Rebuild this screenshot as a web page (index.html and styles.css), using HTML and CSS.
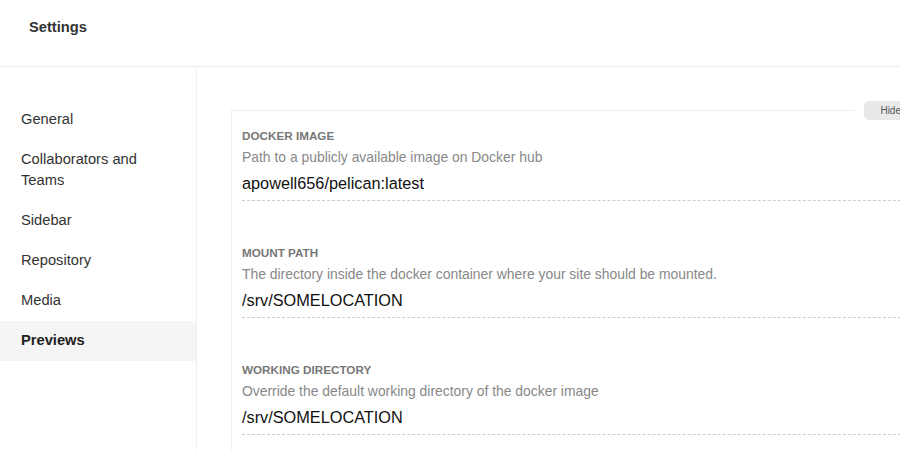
FILE: index.html
```html
<!DOCTYPE html>
<html>
<head>
<meta charset="utf-8">
<link rel="stylesheet" href="styles.css">
</head>
<body>
<div class="page">
  <header class="topbar"><h1 class="title">Settings</h1></header>
  <div class="body">
    <nav class="sidebar">
      <a class="nav-item">General</a>
      <a class="nav-item">Collaborators and Teams</a>
      <a class="nav-item">Sidebar</a>
      <a class="nav-item">Repository</a>
      <a class="nav-item">Media</a>
      <a class="nav-item active">Previews</a>
    </nav>
    <main class="main">
      <fieldset class="card">
        <legend class="legend"><button class="hide-btn">Hide</button></legend>
        <div class="field">
          <div class="label">DOCKER IMAGE</div>
          <div class="desc">Path to a publicly available image on Docker hub</div>
          <div class="value">apowell656/pelican:latest</div>
        </div>
        <div class="field">
          <div class="label">MOUNT PATH</div>
          <div class="desc">The directory inside the docker container where your site should be mounted.</div>
          <div class="value">/srv/SOMELOCATION</div>
        </div>
        <div class="field">
          <div class="label">WORKING DIRECTORY</div>
          <div class="desc">Override the default working directory of the docker image</div>
          <div class="value">/srv/SOMELOCATION</div>
        </div>
      </fieldset>
    </main>
  </div>
</div>
</body>
</html>
```
FILE: styles.css
```css
* { box-sizing: border-box; }
html, body { margin: 0; padding: 0; background: #fff; }
body {
  font-family: "Liberation Sans", Arial, sans-serif;
  color: #333;
  overflow: hidden;
  width: 900px;
  height: 450px;
}
.page { width: 980px; }
.topbar {
  height: 67px;
  border-bottom: 1px solid #eeeeee;
  padding-left: 29px;
  display: flex;
  align-items: center;
  padding-bottom: 13px;
}
.title {
  margin: 0;
  font-size: 14.7px;
  font-weight: bold;
  color: #333;
  line-height: 16px;
}
.body { display: flex; height: 383px; }
.sidebar {
  width: 197px;
  flex: none;
  border-right: 1px solid #eeeeee;
  padding-top: 32.5px;
  display: flex;
  flex-direction: column;
}
.nav-item {
  display: block;
  padding: 9.5px 21px;
  font-size: 14.7px;
  line-height: 21px;
  color: #333;
}
.nav-item.active {
  background: #f5f5f5;
  font-weight: bold;
  color: #222;
}
.main {
  flex: 1;
  padding: 34px 0 0 34px;
}
.card {
  margin: 0;
  border: 1px solid #efefef;
  border-bottom: none;
  padding: 0 30px 0 10px;
  height: 400px;
  width: 726px;
  min-width: 0;
}
.legend {
  margin-left: auto;
  padding: 0 9px;
  line-height: 0;
}
.hide-btn {
  font-family: "Liberation Sans", Arial, sans-serif;
  font-size: 10px;
  color: #555;
  background: #e9e9e9;
  border: none;
  border-radius: 5px;
  height: 19px;
  padding: 0 16px;
  line-height: 19px;
}
.field {
  padding-top: 8px;
  margin-bottom: 36px;
  border-bottom: 1px dashed #cccccc;
  margin-right: -40px;
}
.label {
  font-size: 11.7px;
  font-weight: bold;
  color: #777;
  line-height: 16px;
}
.desc {
  margin-top: 4px;
  font-size: 13.9px;
  color: #888;
  line-height: 18px;
}
.value {
  margin-top: 7px;
  font-size: 16.3px;
  color: #111;
  line-height: 20px;
  padding-bottom: 7px;
}
```
